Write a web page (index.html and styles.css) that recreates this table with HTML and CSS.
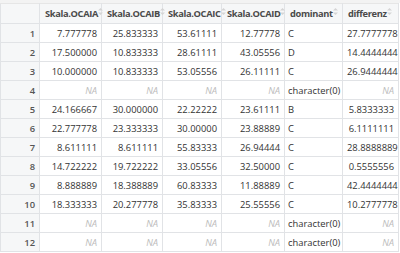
FILE: index.html
```html
<!DOCTYPE html>
<html>
<head>
<meta charset="utf-8">
<link rel="stylesheet" href="styles.css">
</head>
<body>
<div class="toolbar"></div>
<table class="grid">
<colgroup>
<col class="c-idx"><col class="c-a"><col class="c-b"><col class="c-c"><col class="c-d"><col class="c-dom"><col class="c-diff">
</colgroup>
<thead>
<tr>
<th class="idx"></th>
<th>Skala.OCAIA<svg class="sort" width="5" height="7" viewBox="0 0 5 7"><path d="M2.5 0 L5 2.6 H0 Z M2.5 7 L5 4.4 H0 Z"/></svg></th>
<th>Skala.OCAIB<svg class="sort" width="5" height="7" viewBox="0 0 5 7"><path d="M2.5 0 L5 2.6 H0 Z M2.5 7 L5 4.4 H0 Z"/></svg></th>
<th>Skala.OCAIC<svg class="sort" width="5" height="7" viewBox="0 0 5 7"><path d="M2.5 0 L5 2.6 H0 Z M2.5 7 L5 4.4 H0 Z"/></svg></th>
<th>Skala.OCAID<svg class="sort" width="5" height="7" viewBox="0 0 5 7"><path d="M2.5 0 L5 2.6 H0 Z M2.5 7 L5 4.4 H0 Z"/></svg></th>
<th>dominant<svg class="sort" width="5" height="7" viewBox="0 0 5 7"><path d="M2.5 0 L5 2.6 H0 Z M2.5 7 L5 4.4 H0 Z"/></svg></th>
<th>differenz<svg class="sort" width="5" height="7" viewBox="0 0 5 7"><path d="M2.5 0 L5 2.6 H0 Z M2.5 7 L5 4.4 H0 Z"/></svg></th>
</tr>
</thead>
<tbody>
<tr><td class="idx">1</td><td>7.777778</td><td>25.833333</td><td>53.61111</td><td>12.77778</td><td class="txt">C</td><td>27.7777778</td></tr>
<tr><td class="idx">2</td><td>17.500000</td><td>10.833333</td><td>28.61111</td><td>43.05556</td><td class="txt">D</td><td>14.4444444</td></tr>
<tr><td class="idx">3</td><td>10.000000</td><td>10.833333</td><td>53.05556</td><td>26.11111</td><td class="txt">C</td><td>26.9444444</td></tr>
<tr><td class="idx">4</td><td class="na">NA</td><td class="na">NA</td><td class="na">NA</td><td class="na">NA</td><td class="txt">character(0)</td><td class="na">NA</td></tr>
<tr><td class="idx">5</td><td>24.166667</td><td>30.000000</td><td>22.22222</td><td>23.61111</td><td class="txt">B</td><td>5.8333333</td></tr>
<tr><td class="idx">6</td><td>22.777778</td><td>23.333333</td><td>30.00000</td><td>23.88889</td><td class="txt">C</td><td>6.1111111</td></tr>
<tr><td class="idx">7</td><td>8.611111</td><td>8.611111</td><td>55.83333</td><td>26.94444</td><td class="txt">C</td><td>28.8888889</td></tr>
<tr><td class="idx">8</td><td>14.722222</td><td>19.722222</td><td>33.05556</td><td>32.50000</td><td class="txt">C</td><td>0.5555556</td></tr>
<tr><td class="idx">9</td><td>8.888889</td><td>18.388889</td><td>60.83333</td><td>11.88889</td><td class="txt">C</td><td>42.4444444</td></tr>
<tr><td class="idx">10</td><td>18.333333</td><td>20.277778</td><td>35.83333</td><td>25.55556</td><td class="txt">C</td><td>10.2777778</td></tr>
<tr><td class="idx">11</td><td class="na">NA</td><td class="na">NA</td><td class="na">NA</td><td class="na">NA</td><td class="txt">character(0)</td><td class="na">NA</td></tr>
<tr><td class="idx">12</td><td class="na">NA</td><td class="na">NA</td><td class="na">NA</td><td class="na">NA</td><td class="txt">character(0)</td><td class="na">NA</td></tr>
</tbody>
</table>
</body>
</html>
```
FILE: styles.css
```css
html, body {
  margin: 0;
  padding: 0;
  background: #ffffff;
  overflow: hidden;
}
body {
  font-family: "Open Sans", "Liberation Sans", sans-serif;
  font-size: 9.4px;
  color: #333333;
}
.toolbar {
  height: 3px;
  background: #f3f3f3;
}
.grid {
  border-collapse: collapse;
  table-layout: fixed;
  width: 398px;
}
.c-idx { width: 39px; }
.c-a { width: 62px; }
.c-b { width: 61px; }
.c-c { width: 59px; }
.c-d { width: 63px; }
.c-dom { width: 58px; }
.c-diff { width: 56px; }
.grid th, .grid td {
  border: 1px solid #e1e3e6;
  padding: 0 4px;
  white-space: nowrap;
  overflow: visible;
}
.grid th {
  height: 19px;
  background: #f6f7f8;
  text-align: left;
  font-weight: 700;
  font-size: 9.3px;
  letter-spacing: -0.35px;
  color: #4a4a4a;
  padding-left: 5px;
  border-top-color: #e6e6e6;
}
.grid td {
  height: 18px;
  text-align: right;
  background: #ffffff;
}
.grid .idx {
  background: #f6f7f8;
  color: #555;
  font-weight: 600;
}
.grid td.txt {
  text-align: left;
  padding-left: 3px;
}
.grid td.na {
  color: #bcbcbc;
  font-style: italic;
}
.sort {
  vertical-align: top;
  margin-left: 0;
  margin-top: 1px;
  fill: #d5d5d5;
}
```
